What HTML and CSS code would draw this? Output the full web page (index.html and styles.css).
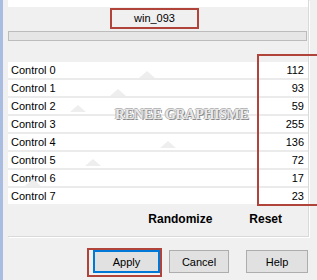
FILE: index.html
```html
<!DOCTYPE html>
<html lang="en">
<head>
    <meta charset="UTF-8">
    <title>win_093</title>
    <link rel="stylesheet" href="styles.css">
</head>
<body>
    <div class="window">
        <div class="panel">
            <div class="top-strip"></div>
            <div class="preset">
                <div class="preset-name">win_093</div>
            </div>
            <div class="bar"></div>
            <div class="gap"></div>
            <div class="rows">
                <div class="row"><span>Control 0</span><span>112</span></div>
                <div class="row"><span>Control 1</span><span>93</span></div>
                <div class="row"><span>Control 2</span><span>59</span></div>
                <div class="row"><span>Control 3</span><span>255</span></div>
                <div class="row"><span>Control 4</span><span>136</span></div>
                <div class="row"><span>Control 5</span><span>72</span></div>
                <div class="row"><span>Control 6</span><span>17</span></div>
                <div class="row"><span>Control 7</span><span>23</span></div>
            </div>
            <div class="actions">
                <span>Randomize</span>
                <span>Reset</span>
            </div>
        </div>
        <div class="buttons">
            <span class="mark"><button class="btn default">Apply</button></span>
            <button class="btn cancel">Cancel</button>
            <button class="btn help">Help</button>
        </div>
    </div>

    <!-- faint triangles behind the watermark -->
    <svg class="shapes" width="317" height="150" viewBox="0 56 317 150">
        <polygon points="139,78 147,71 155,78" />
        <polygon points="110,96 118,89 126,96" />
        <polygon points="70,112 78,105 86,112" />
        <polygon points="160,148 168,141 176,148" />
        <polygon points="85,166 93,159 101,166" />
        <polygon points="25,186 33,179 41,186" />
    </svg>
    <div class="watermark">RENEE GRAPHISME</div>
    <div class="values-mark"></div>
</body>
</html>
```

FILE: styles.css
```css
body {
    margin: 0;
    background: #f0f0f0;
    font-family: 'Liberation Sans', Arial, sans-serif;
    font-size: 11px;
    color: #000;
    width: 317px;
    height: 280px;
    overflow: hidden;
    position: relative;
}
.window {
    border-left: 3px solid #a9bde0;
    padding-left: 5px;
    height: 280px;
    box-sizing: border-box;
}
.panel {
    width: 300px;
    border-right: 1px solid #d9d9d9;
    border-bottom: 1px solid #d9d9d9;
    box-shadow: 1px 1px 0 #fff;
}
.top-strip {
    height: 7px;
    background: #fff;
}
.preset {
    height: 24px;
    padding-top: 1px;
    box-sizing: border-box;
}
.preset-name {
    margin-left: 102px;
    width: 89px;
    height: 21px;
    border: 2px solid #b0443a;
    box-sizing: border-box;
    text-align: center;
    line-height: 17px;
}
.bar {
    width: 299px;
    height: 10px;
    border: 1px solid #bcbcbc;
    background: #e6e6e6;
    box-sizing: border-box;
}
.gap {
    height: 21px;
}
.row {
    display: flex;
    justify-content: space-between;
    height: 16px;
    line-height: 16px;
    padding: 0 4px 0 3px;
    background: #fff;
    border-bottom: 2px solid #ebebeb;
}
.row:last-child {
    border-bottom: none;
}
.actions {
    display: flex;
    justify-content: flex-end;
    gap: 37px;
    height: 32px;
    line-height: 31px;
    padding-right: 26px;
    font-size: 12px;
    font-weight: bold;
}
.buttons {
    display: flex;
    align-items: flex-start;
    margin-top: 11px;
    padding-left: 79px;
}
.mark {
    display: block;
    border: 2px solid #b0443a;
    padding: 0 0 2px 4px;
    margin-right: 7px;
}
.btn {
    height: 23px;
    margin: 0;
    padding: 0;
    background: #e1e1e1;
    border: 1px solid #adadad;
    font-family: 'Liberation Sans', Arial, sans-serif;
    font-size: 11px;
    color: #000;
}
.btn.default {
    display: block;
    width: 67px;
    border: 2px solid #0078d7;
}
.btn.cancel {
    width: 60px;
    margin-top: 2px;
    margin-right: 17px;
}
.btn.help {
    width: 62px;
    margin-top: 2px;
}
.shapes {
    position: absolute;
    left: 0;
    top: 56px;
    fill: #eeeeee;
    pointer-events: none;
}
.watermark {
    position: absolute;
    left: 115px;
    top: 107px;
    font-family: 'Liberation Serif', 'Times New Roman', serif;
    font-size: 14px;
    font-weight: bold;
    letter-spacing: -0.3px;
    color: #e9e9e9;
    text-shadow: 1px 1px 0 #8a8a8a, -1px 0 0 #b5b5b5, 0 -1px 0 #b5b5b5;
}
.values-mark {
    position: absolute;
    left: 257px;
    top: 54px;
    width: 60px;
    height: 152px;
    border: 2px solid #b0443a;
    border-right: none;
    box-sizing: border-box;
}
```
